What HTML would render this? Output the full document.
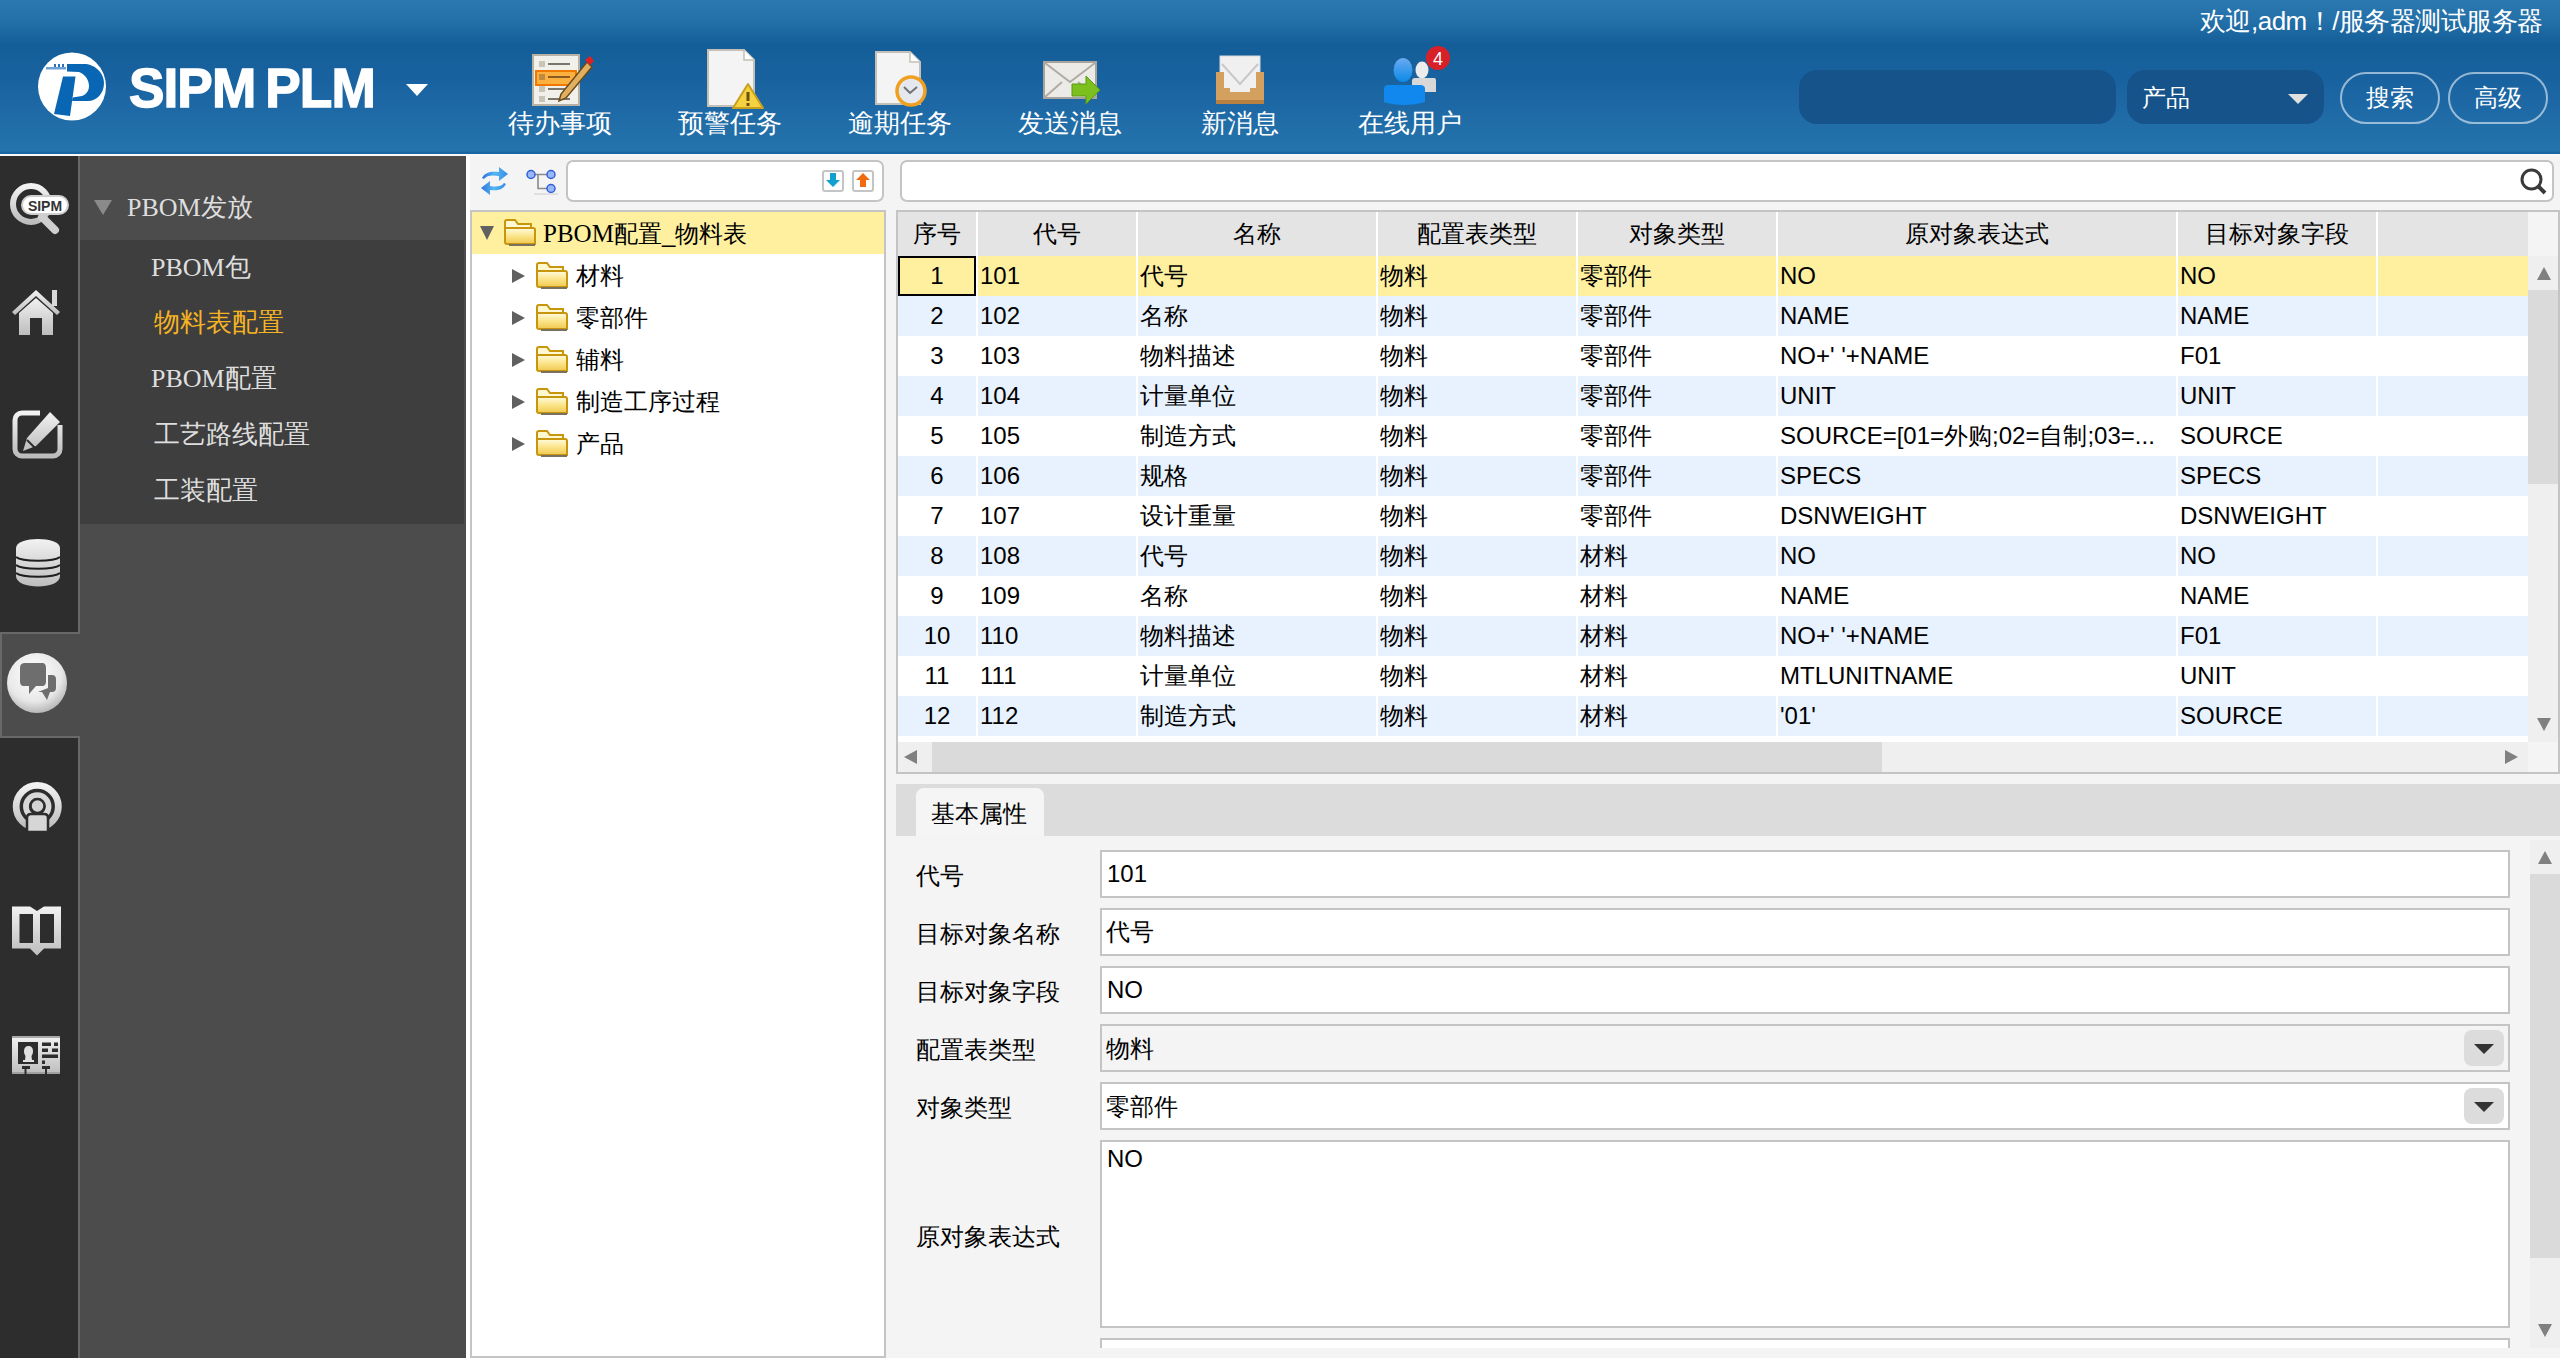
<!DOCTYPE html>
<html><head><meta charset="utf-8">
<style>
*{box-sizing:border-box;margin:0;padding:0}
html,body{width:2560px;height:1358px;overflow:hidden;background:#f4f4f4;font-family:"Liberation Sans",sans-serif;font-size:24px;color:#000;font-weight:500}
.a{position:absolute}
#hdr{left:0;top:0;width:2560px;height:154px;background:linear-gradient(#2b78b0 0px,#2470a9 20px,#135e98 45px,#1962a0 80px,#2371ab 140px,#2674ac 151px,#1a66a2 152px,#1a66a2 154px)}
#hline{left:0;top:154px;width:2560px;height:2px;background:#f8f8f8}
.tb{color:#fff;font-size:26px;line-height:26px;text-align:center;white-space:nowrap}
#iconcol{left:0;top:156px;width:78px;height:1202px;background:#2d2d2d}
#iconline{left:78px;top:156px;width:2px;height:1202px;background:#686868}
#panel{left:80px;top:156px;width:386px;height:1202px;background:#4c4c4c}
#submenu{left:80px;top:240px;width:384px;height:284px;background:#3e3e3e}
.mi{color:#dedede;font-size:26px;line-height:26px;white-space:nowrap;font-family:"Liberation Serif",serif;font-weight:400}
#split1{left:466px;top:156px;width:4px;height:1202px;background:#fff}
#treetool{left:470px;top:156px;width:416px;height:54px;background:#f4f4f4}
#tree{left:470px;top:210px;width:416px;height:1148px;background:#fff;border:2px solid #c4c4c4}
.sbox{background:#fff;border:2px solid #c4c4c4;border-radius:7px}
#grid{left:896px;top:210px;width:1664px;height:564px;background:#fff;border:2px solid #c4c4c4}
.hc{top:212px;height:44px;background:#e4e4e4;line-height:44px;text-align:center;white-space:nowrap}
.row{left:898px;width:1630px;height:40px}
.cell{top:0;height:40px;line-height:40px;white-space:nowrap;overflow:hidden;padding-left:2px}
#tabs{left:896px;top:784px;width:1664px;height:52px;background:#dcdcdc}
#tab1{left:916px;top:788px;width:128px;height:48px;background:#f5f5f5;border-radius:8px 8px 0 0}
.lbl{left:916px;font-size:24px;line-height:24px;white-space:nowrap}
.inp{left:1100px;width:1410px;height:48px;background:#fff;border:2px solid #c4c4c4;line-height:44px;padding-left:4px;white-space:nowrap}
.ddb{position:absolute;right:4px;top:4px;width:40px;height:36px;background:#dcdcdc;border-radius:8px}
.ddb:after{content:"";position:absolute;left:10px;top:14px;border-left:10px solid transparent;border-right:10px solid transparent;border-top:10px solid #333}
</style></head><body>
<!-- HEADER -->
<div id="hdr" class="a"></div>
<div id="hline" class="a"></div>

<!-- logo -->
<svg class="a" style="left:36px;top:50px" width="74" height="74" viewBox="36 50 74 74">
 <circle cx="72" cy="86.5" r="34" fill="#fff"/>
 <path d="M67 64 L84 64 C94 64 104 72 104 83 C104 94 96 101 88 101 L72 101 L72.6 97.5 L82 96 C87 94 89 90 89 86 C89 80 85 74 79 72 L67 71.5 Z" fill="#0866b4"/>
 <path d="M63 76.5 L75.5 76.5 L70 116 L54 114 Z" fill="#0866b4"/>
 <rect x="46" y="67" width="20" height="2.5" fill="#6fa2d4"/>
 <rect x="54" y="64" width="2" height="3" fill="#2a72b8"/><rect x="58" y="64" width="2" height="3" fill="#2a72b8"/><rect x="62" y="64" width="2" height="3" fill="#2a72b8"/>
</svg>
<div class="a" style="left:129px;top:58px;font-weight:bold;font-size:56px;line-height:60px;color:#fff;-webkit-text-stroke:1.4px #fff;transform:scaleX(0.95);transform-origin:0 0;white-space:nowrap;letter-spacing:-1px;word-spacing:-4px">SIPM PLM</div>
<div class="a" style="left:406px;top:84px;width:0;height:0;border-left:11px solid transparent;border-right:11px solid transparent;border-top:12px solid #fff"></div>

<!-- toolbar labels -->
<div class="a tb" style="left:500px;top:110px;width:120px">待办事项</div>
<div class="a tb" style="left:670px;top:110px;width:120px">预警任务</div>
<div class="a tb" style="left:840px;top:110px;width:120px">逾期任务</div>
<div class="a tb" style="left:1010px;top:110px;width:120px">发送消息</div>
<div class="a tb" style="left:1180px;top:110px;width:120px">新消息</div>
<div class="a tb" style="left:1350px;top:110px;width:120px">在线用户</div>

<!-- todo icon -->
<svg class="a" style="left:530px;top:52px" width="64" height="56" viewBox="0 0 64 56">
 <rect x="3" y="3" width="46" height="50" fill="#f2f0ea" stroke="#b8b2a4" stroke-width="2"/>
 <g fill="#c9c4b8"><rect x="9" y="9" width="6" height="6"/><rect x="9" y="34" width="6" height="6"/><rect x="9" y="44" width="6" height="6"/></g>
 <g stroke="#7a766c" stroke-width="2"><line x1="18" y1="12" x2="40" y2="12"/><line x1="18" y1="37" x2="40" y2="37"/><line x1="18" y1="47" x2="40" y2="47"/></g>
 <rect x="6" y="19" width="40" height="14" fill="#fbb040" stroke="#f07800" stroke-width="2"/>
 <rect x="9" y="22" width="6" height="6" fill="#c08a40"/><line x1="18" y1="25" x2="40" y2="25" stroke="#8a5a20" stroke-width="2"/>
 <path d="M57 10 L62 15 L36 46 L29 49 L31 42 Z" fill="#e0b060" stroke="#6a4a1a" stroke-width="1.5"/>
 <path d="M55 8 L60 4 L64 9 L60 13 Z" fill="#e02020"/>
</svg>
<!-- warning doc icon -->
<svg class="a" style="left:704px;top:48px" width="64" height="62" viewBox="0 0 64 62">
 <path d="M4 2 L40 2 L50 12 L50 58 L4 58 Z" fill="#f4f4f4" stroke="#c4c0b8" stroke-width="2"/>
 <path d="M40 2 L40 12 L50 12" fill="#fff" stroke="#c4c0b8" stroke-width="1.5"/>
 <path d="M44 36 L59 60 L29 60 Z" fill="#f6d240" stroke="#c8a020" stroke-width="2" stroke-linejoin="round"/>
 <rect x="42.5" y="44" width="3" height="9" fill="#6a5010"/><rect x="42.5" y="55" width="3" height="3" fill="#6a5010"/>
</svg>
<!-- overdue doc icon -->
<svg class="a" style="left:874px;top:50px" width="56" height="60" viewBox="0 0 56 60">
 <path d="M2 2 L36 2 L46 12 L46 54 L2 54 Z" fill="#f4f4f4" stroke="#c4c0b8" stroke-width="2"/>
 <path d="M36 2 L36 12 L46 12" fill="#fff" stroke="#c4c0b8" stroke-width="1.5"/>
 <circle cx="37" cy="41" r="14" fill="#e6e8f0" stroke="#f0a020" stroke-width="3.5"/>
 <path d="M30 37 L36 43 L43 37" fill="none" stroke="#707070" stroke-width="2"/>
</svg>
<!-- send msg icon -->
<svg class="a" style="left:1042px;top:60px" width="60" height="48" viewBox="0 0 60 48">
 <rect x="2" y="2" width="52" height="36" fill="#ecebe8" stroke="#a8a49c" stroke-width="2"/>
 <path d="M3 3 L28 22 L53 3 M3 37 L20 22 M53 37 L36 22" fill="none" stroke="#b0aca4" stroke-width="2"/>
 <path d="M30 24 L44 24 L44 16 L58 30 L44 44 L44 36 L30 36 Z" fill="#7cc020" stroke="#5a9a10" stroke-width="1"/>
</svg>
<!-- new msg icon -->
<svg class="a" style="left:1214px;top:54px" width="52" height="54" viewBox="0 0 52 54">
 <rect x="6" y="2" width="40" height="40" fill="#f0f0f0" stroke="#d8d8d8" stroke-width="1"/>
 <path d="M8 10 L26 30 L44 10" fill="none" stroke="#c8c8c8" stroke-width="2"/>
 <path d="M2 18 L10 18 L10 34 L16 34 L16 38 L36 38 L36 34 L42 34 L42 18 L50 18 L50 50 L2 50 Z" fill="#d4a060"/>
 <rect x="2" y="46" width="48" height="4" fill="#b88040"/>
</svg>
<!-- users icon -->
<svg class="a" style="left:1380px;top:44px" width="74" height="64" viewBox="0 0 74 64">
 <defs><linearGradient id="ub" x1="0" y1="0" x2="0" y2="1"><stop offset="0" stop-color="#6aaaf0"/><stop offset="1" stop-color="#0a8ae8"/></linearGradient></defs>
 <ellipse cx="42" cy="26" rx="6.5" ry="8.5" fill="#ececec"/>
 <path d="M32 37 C32 35 33 34 35 34 L54 34 C56 34 56 36 56 38 L56 48 L32 48 Z" fill="#d8d8d8"/>
 <ellipse cx="23" cy="26" rx="9.5" ry="12" fill="url(#ub)"/>
 <path d="M4 45 C4 41 7 41 10 41 L40 41 C43 41 45 42 45 45 L45 58 C32 62 16 62 4 58 Z" fill="#1088ee"/>
 <circle cx="58" cy="14" r="12" fill="#d82028"/>
 <text x="58" y="21" font-family="Liberation Sans" font-size="18" fill="#fff" text-anchor="middle">4</text>
</svg>

<!-- welcome -->
<div class="a" style="right:17px;top:8px;color:#fff;font-size:26px;line-height:26px;letter-spacing:-0.5px;white-space:nowrap">欢迎,adm！/服务器测试服务器</div>
<!-- search -->
<div class="a" style="left:1799px;top:70px;width:317px;height:54px;background:#15538a;border-radius:18px"></div>
<div class="a" style="left:2127px;top:70px;width:197px;height:54px;background:#15538a;border-radius:18px"></div>
<div class="a" style="left:2142px;top:85px;color:#fff;font-size:24px;line-height:26px">产品</div>
<div class="a" style="left:2288px;top:94px;width:0;height:0;border-left:10px solid transparent;border-right:10px solid transparent;border-top:10px solid #e0e0e0"></div>
<div class="a" style="left:2340px;top:72px;width:100px;height:52px;border:2px solid rgba(255,255,255,0.55);border-radius:26px;color:#fff;text-align:center;line-height:48px">搜索</div>
<div class="a" style="left:2448px;top:72px;width:100px;height:52px;border:2px solid rgba(255,255,255,0.55);border-radius:26px;color:#fff;text-align:center;line-height:48px">高级</div>

<!-- LEFT ICON COLUMN -->
<div id="iconcol" class="a"></div>
<div id="iconline" class="a"></div>
<div class="a" style="left:0;top:632px;width:80px;height:106px;background:#4c4c4c;border:2px solid #686868;border-right:none"></div>

<svg class="a" style="left:0;top:156px" width="78" height="940" viewBox="0 156 78 940">
 <defs>
  <linearGradient id="gg" x1="0" y1="0" x2="0" y2="1"><stop offset="0" stop-color="#f2f2f2"/><stop offset="1" stop-color="#bdbdbd"/></linearGradient>
  <radialGradient id="rg" cx="0.45" cy="0.35" r="0.65"><stop offset="0" stop-color="#ffffff"/><stop offset="0.7" stop-color="#e8e8e8"/><stop offset="1" stop-color="#b8b8b8"/></radialGradient>
 </defs>
 <!-- SIPM magnifier -->
 <circle cx="31" cy="204" r="18" fill="none" stroke="url(#gg)" stroke-width="6"/>
 <path d="M42 217 L55 230" stroke="#cfcfcf" stroke-width="8" stroke-linecap="round"/>
 <rect x="22" y="196" width="46" height="18" rx="9" fill="#fff" stroke="#cfcfcf" stroke-width="2"/>
 <text x="45" y="211" font-family="Liberation Sans" font-size="14" font-weight="bold" fill="#333" text-anchor="middle">SIPM</text>
 <!-- house -->
 <path d="M36 290 L12 312 L15 315 L36 296 L57 315 L60 312 Z" fill="url(#gg)"/>
 <rect x="52" y="290" width="5" height="16" fill="#d8d8d8"/>
 <path d="M19 313 L36 298 L53 313 L53 335 L42 335 L42 318 L30 318 L30 335 L19 335 Z" fill="url(#gg)"/>
 <!-- edit -->
 <rect x="15" y="413" width="45" height="43" rx="7" fill="none" stroke="url(#gg)" stroke-width="5"/>
 <rect x="40" y="405" width="24" height="20" fill="#2d2d2d"/>
 <path d="M50 412 L60 422 L36 446 L23 451 L27 438 Z" fill="url(#gg)"/>
 <path d="M27 440 L35 448" stroke="#2d2d2d" stroke-width="2"/>
 <!-- database -->
 <path d="M16 548 C16 536 60 536 60 548 L60 576 C60 590 16 590 16 576 Z" fill="url(#gg)"/>
 <g fill="none" stroke="#1e1e1e" stroke-width="2.2">
  <path d="M16 557 C22 562 54 562 60 557"/>
  <path d="M16 565 C22 570 54 570 60 565"/>
  <path d="M16 573 C22 578 54 578 60 573"/>
 </g>
 <!-- chat glossy -->
 <circle cx="37" cy="683" r="30" fill="url(#rg)"/>
 <path d="M20 668 C20 664 22 663 26 663 L42 663 C45 663 46 665 46 668 L46 681 C46 684 45 686 42 686 L36 686 L29 694 L29 686 L24 686 C21 686 20 684 20 681 Z" fill="#6e6e6e"/>
 <path d="M48 675 L52 675 C55 675 56 677 56 679 L56 688 C56 690 55 692 52 692 L50 692 L47 700 L42 692 L38 692 L48 688 Z" fill="#6e6e6e"/>
 <!-- broadcast -->
 <circle cx="37.25" cy="806.5" r="21.1" fill="none" stroke="url(#gg)" stroke-width="6.8"/>
 <circle cx="37.25" cy="806.5" r="11.3" fill="none" stroke="#d8d8d8" stroke-width="5.8"/>
 <circle cx="37.5" cy="806" r="7" fill="#d4d4d4" stroke="#2d2d2d" stroke-width="2.5"/>
 <path d="M27 832 L27 818 C27 815 29 814 31 814 L44 814 C46 814 48 815 48 818 L48 832 Z" fill="#d6d6d6" stroke="#2d2d2d" stroke-width="2.5"/>
 <rect x="24" y="833" width="27" height="4" fill="#2d2d2d"/>
 <!-- book -->
 <path d="M12 906.5 L30 906.5 L37 911 L44 906.5 L61 906.5 L61 948.5 L44 948.5 L37 955.5 L30 948.5 L12 948.5 Z" fill="url(#gg)"/>
 <rect x="19.5" y="914" width="13.5" height="29" fill="#2d2d2d"/>
 <rect x="40" y="914" width="14" height="29" fill="#2d2d2d"/>
 <!-- id card -->
 <rect x="12" y="1036" width="48" height="38" fill="url(#gg)"/>
 <rect x="12" y="1036" width="48" height="2" fill="#a8a8a8"/>
 <rect x="12" y="1072" width="48" height="2" fill="#a0a0a0"/>
 <rect x="18" y="1042" width="20" height="22" fill="#2d2d2d"/>
 <path d="M28.5 1046 C31.5 1046 33 1048 33 1051 C33 1054 32 1055 31.5 1056 L32 1060 L34 1060 L34 1062 L23 1062 L23 1060 L25 1060 L25.5 1056 C25 1055 24 1054 24 1051 C24 1048 25.5 1046 28.5 1046 Z" fill="#e0e0e0"/>
 <g fill="#2d2d2d">
  <rect x="42" y="1042.5" width="9" height="3.5"/><rect x="54" y="1042.5" width="4" height="3.5"/>
  <rect x="42" y="1048.5" width="6" height="3.5"/><rect x="52" y="1048.5" width="6" height="3.5"/>
  <rect x="42" y="1054.5" width="16" height="3.5"/><rect x="42" y="1060.5" width="3" height="3.5"/>
  <rect x="22" y="1066" width="8" height="3"/><rect x="42" y="1066" width="8" height="3"/>
  <rect x="24.5" y="1069" width="2" height="5"/><rect x="45" y="1069" width="2" height="5"/>
 </g>
</svg>

<!-- SIDEBAR PANEL -->
<div id="panel" class="a"></div>
<div id="submenu" class="a"></div>

<div class="a" style="left:94px;top:200px;width:0;height:0;border-left:9px solid transparent;border-right:9px solid transparent;border-top:15px solid #8a8a8a"></div>
<div class="a mi" style="left:127px;top:195px">PBOM发放</div>
<div class="a mi" style="left:151px;top:255px">PBOM包</div>
<div class="a mi" style="left:154px;top:310px;color:#f5b324">物料表配置</div>
<div class="a mi" style="left:151px;top:366px">PBOM配置</div>
<div class="a mi" style="left:154px;top:422px">工艺路线配置</div>
<div class="a mi" style="left:154px;top:478px">工装配置</div>

<div id="split1" class="a"></div>

<!-- TREE -->
<div id="treetool" class="a"></div>
<div id="tree" class="a"></div>

<svg width="0" height="0" style="position:absolute"><defs><linearGradient id="fg" x1="0" y1="0" x2="0" y2="1"><stop offset="0" stop-color="#fffbe0"/><stop offset="0.5" stop-color="#fbe58a"/><stop offset="1" stop-color="#f0c850"/></linearGradient></defs></svg>
<!-- tree toolbar -->
<svg class="a" style="left:478px;top:164px" width="34" height="34" viewBox="0 0 34 34">
 <defs><linearGradient id="ra" x1="0" y1="0" x2="1" y2="0"><stop offset="0" stop-color="#3070e0"/><stop offset="0.5" stop-color="#50b8f0"/><stop offset="1" stop-color="#3a8ae8"/></linearGradient></defs>
 <path d="M4 14 C7 8 13 7 21 8 L21 3 L30 10 L21 17 L21 12 C14 11 9 11 6 15 Z" fill="url(#ra)"/>
 <path d="M28 20 C25 26 19 27 12 26 L12 31 L3 24 L12 17 L12 22 C18 23 23 23 26 19 Z" fill="url(#ra)"/>
</svg>
<svg class="a" style="left:522px;top:166px" width="40" height="32" viewBox="0 0 40 32">
 <path d="M9 8.5 L25 8.5 M16 8.5 L16 22.5 L25 22.5" stroke="#8a8a8a" stroke-width="1.6" fill="none"/>
 <circle cx="9" cy="8.5" r="4" fill="#9ab8f8" stroke="#3060d8" stroke-width="1.5"/>
 <circle cx="29" cy="8.5" r="4" fill="#9ab8f8" stroke="#3060d8" stroke-width="1.5"/>
 <circle cx="29" cy="22.5" r="4" fill="#9ab8f8" stroke="#3060d8" stroke-width="1.5"/>
 <rect x="12" y="27" width="24" height="2" fill="#e0e0e0"/>
</svg>
<div class="a sbox" style="left:566px;top:160px;width:318px;height:42px"></div>
<div class="a" style="left:822px;top:170px;width:22px;height:22px;border:2px solid #c4c4c4;border-radius:3px;background:#fff"></div>
<svg class="a" style="left:826px;top:173px" width="14" height="16" viewBox="0 0 14 16"><path d="M4 0 L10 0 L10 7 L14 7 L7 14 L0 7 L4 7 Z" fill="#12a0d0"/></svg>
<div class="a" style="left:852px;top:170px;width:22px;height:22px;border:2px solid #c4c4c4;border-radius:3px;background:#fff"></div>
<svg class="a" style="left:856px;top:173px" width="14" height="16" viewBox="0 0 14 16"><path d="M7 0 L14 7 L10 7 L10 14 L4 14 L4 7 L0 7 Z" fill="#f06a10"/></svg>
<!-- tree body -->
<div class="a" style="left:472px;top:212px;width:412px;height:42px;background:#fff0a0"></div>
<div class="a" style="left:480px;top:226px;width:0;height:0;border-left:7px solid transparent;border-right:7px solid transparent;border-top:14px solid #606060"></div>
<svg class="a" style="left:503px;top:219px" width="34" height="28" viewBox="0 0 34 28"><defs></defs><path d="M2 6 L2 3 C2 2 3 1 4 1 L12 1 L15 5 L28 5 L28 10 L2 10 Z" fill="#fff8d0" stroke="#c8960c" stroke-width="2"/><path d="M2 9 L30 9 C31 9 32 10 32 11 L32 25 L4 25 C3 25 2 24 2 23 Z" fill="url(#fg)" stroke="#c8960c" stroke-width="2"/><path d="M6 26 L32 26" stroke="#7a7060" stroke-width="2"/></svg>
<div class="a" style="left:543px;top:222px;line-height:24px;white-space:nowrap"><span style="font-family:'Liberation Serif',serif;font-size:25px">PBOM</span>配置_物料表</div>
<div class="a" style="left:512px;top:269px;width:0;height:0;border-top:7px solid transparent;border-bottom:7px solid transparent;border-left:13px solid #606060"></div>
<svg class="a" style="left:535px;top:262px" width="34" height="28" viewBox="0 0 34 28"><defs></defs><path d="M2 6 L2 3 C2 2 3 1 4 1 L12 1 L15 5 L28 5 L28 10 L2 10 Z" fill="#fff8d0" stroke="#c8960c" stroke-width="2"/><path d="M2 9 L30 9 C31 9 32 10 32 11 L32 25 L4 25 C3 25 2 24 2 23 Z" fill="url(#fg)" stroke="#c8960c" stroke-width="2"/><path d="M6 26 L32 26" stroke="#7a7060" stroke-width="2"/></svg>
<div class="a" style="left:576px;top:264px;line-height:24px;white-space:nowrap">材料</div>
<div class="a" style="left:512px;top:311px;width:0;height:0;border-top:7px solid transparent;border-bottom:7px solid transparent;border-left:13px solid #606060"></div>
<svg class="a" style="left:535px;top:304px" width="34" height="28" viewBox="0 0 34 28"><defs></defs><path d="M2 6 L2 3 C2 2 3 1 4 1 L12 1 L15 5 L28 5 L28 10 L2 10 Z" fill="#fff8d0" stroke="#c8960c" stroke-width="2"/><path d="M2 9 L30 9 C31 9 32 10 32 11 L32 25 L4 25 C3 25 2 24 2 23 Z" fill="url(#fg)" stroke="#c8960c" stroke-width="2"/><path d="M6 26 L32 26" stroke="#7a7060" stroke-width="2"/></svg>
<div class="a" style="left:576px;top:306px;line-height:24px;white-space:nowrap">零部件</div>
<div class="a" style="left:512px;top:353px;width:0;height:0;border-top:7px solid transparent;border-bottom:7px solid transparent;border-left:13px solid #606060"></div>
<svg class="a" style="left:535px;top:346px" width="34" height="28" viewBox="0 0 34 28"><defs></defs><path d="M2 6 L2 3 C2 2 3 1 4 1 L12 1 L15 5 L28 5 L28 10 L2 10 Z" fill="#fff8d0" stroke="#c8960c" stroke-width="2"/><path d="M2 9 L30 9 C31 9 32 10 32 11 L32 25 L4 25 C3 25 2 24 2 23 Z" fill="url(#fg)" stroke="#c8960c" stroke-width="2"/><path d="M6 26 L32 26" stroke="#7a7060" stroke-width="2"/></svg>
<div class="a" style="left:576px;top:348px;line-height:24px;white-space:nowrap">辅料</div>
<div class="a" style="left:512px;top:395px;width:0;height:0;border-top:7px solid transparent;border-bottom:7px solid transparent;border-left:13px solid #606060"></div>
<svg class="a" style="left:535px;top:388px" width="34" height="28" viewBox="0 0 34 28"><defs></defs><path d="M2 6 L2 3 C2 2 3 1 4 1 L12 1 L15 5 L28 5 L28 10 L2 10 Z" fill="#fff8d0" stroke="#c8960c" stroke-width="2"/><path d="M2 9 L30 9 C31 9 32 10 32 11 L32 25 L4 25 C3 25 2 24 2 23 Z" fill="url(#fg)" stroke="#c8960c" stroke-width="2"/><path d="M6 26 L32 26" stroke="#7a7060" stroke-width="2"/></svg>
<div class="a" style="left:576px;top:390px;line-height:24px;white-space:nowrap">制造工序过程</div>
<div class="a" style="left:512px;top:437px;width:0;height:0;border-top:7px solid transparent;border-bottom:7px solid transparent;border-left:13px solid #606060"></div>
<svg class="a" style="left:535px;top:430px" width="34" height="28" viewBox="0 0 34 28"><defs></defs><path d="M2 6 L2 3 C2 2 3 1 4 1 L12 1 L15 5 L28 5 L28 10 L2 10 Z" fill="#fff8d0" stroke="#c8960c" stroke-width="2"/><path d="M2 9 L30 9 C31 9 32 10 32 11 L32 25 L4 25 C3 25 2 24 2 23 Z" fill="url(#fg)" stroke="#c8960c" stroke-width="2"/><path d="M6 26 L32 26" stroke="#7a7060" stroke-width="2"/></svg>
<div class="a" style="left:576px;top:432px;line-height:24px;white-space:nowrap">产品</div>

<!-- GRID -->
<div class="a sbox" style="left:900px;top:160px;width:1654px;height:42px"></div>
<div id="grid" class="a"></div>

<!-- grid header -->
<div class="a" style="left:898px;top:212px;width:1630px;height:44px;background:#fff"></div>
<div class="a" style="left:898px;top:212px;width:78px;height:44px;background:#e4e4e4"></div>
<div class="a" style="left:898px;top:222px;width:78px;line-height:24px;text-align:center;white-space:nowrap">序号</div>
<div class="a" style="left:978px;top:212px;width:158px;height:44px;background:#e4e4e4"></div>
<div class="a" style="left:978px;top:222px;width:158px;line-height:24px;text-align:center;white-space:nowrap">代号</div>
<div class="a" style="left:1138px;top:212px;width:238px;height:44px;background:#e4e4e4"></div>
<div class="a" style="left:1138px;top:222px;width:238px;line-height:24px;text-align:center;white-space:nowrap">名称</div>
<div class="a" style="left:1378px;top:212px;width:198px;height:44px;background:#e4e4e4"></div>
<div class="a" style="left:1378px;top:222px;width:198px;line-height:24px;text-align:center;white-space:nowrap">配置表类型</div>
<div class="a" style="left:1578px;top:212px;width:198px;height:44px;background:#e4e4e4"></div>
<div class="a" style="left:1578px;top:222px;width:198px;line-height:24px;text-align:center;white-space:nowrap">对象类型</div>
<div class="a" style="left:1778px;top:212px;width:398px;height:44px;background:#e4e4e4"></div>
<div class="a" style="left:1778px;top:222px;width:398px;line-height:24px;text-align:center;white-space:nowrap">原对象表达式</div>
<div class="a" style="left:2178px;top:212px;width:198px;height:44px;background:#e4e4e4"></div>
<div class="a" style="left:2178px;top:222px;width:198px;line-height:24px;text-align:center;white-space:nowrap">目标对象字段</div>
<div class="a" style="left:2378px;top:212px;width:150px;height:44px;background:#e4e4e4"></div>
<div class="a" style="left:898px;top:256px;width:1630px;height:40px;background:#fff"></div>
<div class="a" style="left:898px;top:256px;width:78px;height:40px;background:#fff0a0"></div>
<div class="a" style="left:978px;top:256px;width:158px;height:40px;background:#fff0a0"></div>
<div class="a" style="left:1138px;top:256px;width:238px;height:40px;background:#fff0a0"></div>
<div class="a" style="left:1378px;top:256px;width:198px;height:40px;background:#fff0a0"></div>
<div class="a" style="left:1578px;top:256px;width:198px;height:40px;background:#fff0a0"></div>
<div class="a" style="left:1778px;top:256px;width:398px;height:40px;background:#fff0a0"></div>
<div class="a" style="left:2178px;top:256px;width:198px;height:40px;background:#fff0a0"></div>
<div class="a" style="left:2378px;top:256px;width:150px;height:40px;background:#fff0a0"></div>
<div class="a" style="left:898px;top:264px;width:78px;line-height:24px;text-align:center">1</div>
<div class="a" style="left:980px;top:264px;line-height:24px;white-space:nowrap">101</div>
<div class="a" style="left:1140px;top:264px;line-height:24px;white-space:nowrap">代号</div>
<div class="a" style="left:1380px;top:264px;line-height:24px;white-space:nowrap">物料</div>
<div class="a" style="left:1580px;top:264px;line-height:24px;white-space:nowrap">零部件</div>
<div class="a" style="left:1780px;top:264px;line-height:24px;white-space:nowrap">NO</div>
<div class="a" style="left:2180px;top:264px;line-height:24px;white-space:nowrap">NO</div>
<div class="a" style="left:898px;top:296px;width:1630px;height:40px;background:#fff"></div>
<div class="a" style="left:898px;top:296px;width:78px;height:40px;background:#e8f2fe"></div>
<div class="a" style="left:978px;top:296px;width:158px;height:40px;background:#e8f2fe"></div>
<div class="a" style="left:1138px;top:296px;width:238px;height:40px;background:#e8f2fe"></div>
<div class="a" style="left:1378px;top:296px;width:198px;height:40px;background:#e8f2fe"></div>
<div class="a" style="left:1578px;top:296px;width:198px;height:40px;background:#e8f2fe"></div>
<div class="a" style="left:1778px;top:296px;width:398px;height:40px;background:#e8f2fe"></div>
<div class="a" style="left:2178px;top:296px;width:198px;height:40px;background:#e8f2fe"></div>
<div class="a" style="left:2378px;top:296px;width:150px;height:40px;background:#e8f2fe"></div>
<div class="a" style="left:898px;top:304px;width:78px;line-height:24px;text-align:center">2</div>
<div class="a" style="left:980px;top:304px;line-height:24px;white-space:nowrap">102</div>
<div class="a" style="left:1140px;top:304px;line-height:24px;white-space:nowrap">名称</div>
<div class="a" style="left:1380px;top:304px;line-height:24px;white-space:nowrap">物料</div>
<div class="a" style="left:1580px;top:304px;line-height:24px;white-space:nowrap">零部件</div>
<div class="a" style="left:1780px;top:304px;line-height:24px;white-space:nowrap">NAME</div>
<div class="a" style="left:2180px;top:304px;line-height:24px;white-space:nowrap">NAME</div>
<div class="a" style="left:898px;top:336px;width:1630px;height:40px;background:#fff"></div>
<div class="a" style="left:898px;top:336px;width:78px;height:40px;background:#fff"></div>
<div class="a" style="left:978px;top:336px;width:158px;height:40px;background:#fff"></div>
<div class="a" style="left:1138px;top:336px;width:238px;height:40px;background:#fff"></div>
<div class="a" style="left:1378px;top:336px;width:198px;height:40px;background:#fff"></div>
<div class="a" style="left:1578px;top:336px;width:198px;height:40px;background:#fff"></div>
<div class="a" style="left:1778px;top:336px;width:398px;height:40px;background:#fff"></div>
<div class="a" style="left:2178px;top:336px;width:198px;height:40px;background:#fff"></div>
<div class="a" style="left:2378px;top:336px;width:150px;height:40px;background:#fff"></div>
<div class="a" style="left:898px;top:344px;width:78px;line-height:24px;text-align:center">3</div>
<div class="a" style="left:980px;top:344px;line-height:24px;white-space:nowrap">103</div>
<div class="a" style="left:1140px;top:344px;line-height:24px;white-space:nowrap">物料描述</div>
<div class="a" style="left:1380px;top:344px;line-height:24px;white-space:nowrap">物料</div>
<div class="a" style="left:1580px;top:344px;line-height:24px;white-space:nowrap">零部件</div>
<div class="a" style="left:1780px;top:344px;line-height:24px;white-space:nowrap">NO+' '+NAME</div>
<div class="a" style="left:2180px;top:344px;line-height:24px;white-space:nowrap">F01</div>
<div class="a" style="left:898px;top:376px;width:1630px;height:40px;background:#fff"></div>
<div class="a" style="left:898px;top:376px;width:78px;height:40px;background:#e8f2fe"></div>
<div class="a" style="left:978px;top:376px;width:158px;height:40px;background:#e8f2fe"></div>
<div class="a" style="left:1138px;top:376px;width:238px;height:40px;background:#e8f2fe"></div>
<div class="a" style="left:1378px;top:376px;width:198px;height:40px;background:#e8f2fe"></div>
<div class="a" style="left:1578px;top:376px;width:198px;height:40px;background:#e8f2fe"></div>
<div class="a" style="left:1778px;top:376px;width:398px;height:40px;background:#e8f2fe"></div>
<div class="a" style="left:2178px;top:376px;width:198px;height:40px;background:#e8f2fe"></div>
<div class="a" style="left:2378px;top:376px;width:150px;height:40px;background:#e8f2fe"></div>
<div class="a" style="left:898px;top:384px;width:78px;line-height:24px;text-align:center">4</div>
<div class="a" style="left:980px;top:384px;line-height:24px;white-space:nowrap">104</div>
<div class="a" style="left:1140px;top:384px;line-height:24px;white-space:nowrap">计量单位</div>
<div class="a" style="left:1380px;top:384px;line-height:24px;white-space:nowrap">物料</div>
<div class="a" style="left:1580px;top:384px;line-height:24px;white-space:nowrap">零部件</div>
<div class="a" style="left:1780px;top:384px;line-height:24px;white-space:nowrap">UNIT</div>
<div class="a" style="left:2180px;top:384px;line-height:24px;white-space:nowrap">UNIT</div>
<div class="a" style="left:898px;top:416px;width:1630px;height:40px;background:#fff"></div>
<div class="a" style="left:898px;top:416px;width:78px;height:40px;background:#fff"></div>
<div class="a" style="left:978px;top:416px;width:158px;height:40px;background:#fff"></div>
<div class="a" style="left:1138px;top:416px;width:238px;height:40px;background:#fff"></div>
<div class="a" style="left:1378px;top:416px;width:198px;height:40px;background:#fff"></div>
<div class="a" style="left:1578px;top:416px;width:198px;height:40px;background:#fff"></div>
<div class="a" style="left:1778px;top:416px;width:398px;height:40px;background:#fff"></div>
<div class="a" style="left:2178px;top:416px;width:198px;height:40px;background:#fff"></div>
<div class="a" style="left:2378px;top:416px;width:150px;height:40px;background:#fff"></div>
<div class="a" style="left:898px;top:424px;width:78px;line-height:24px;text-align:center">5</div>
<div class="a" style="left:980px;top:424px;line-height:24px;white-space:nowrap">105</div>
<div class="a" style="left:1140px;top:424px;line-height:24px;white-space:nowrap">制造方式</div>
<div class="a" style="left:1380px;top:424px;line-height:24px;white-space:nowrap">物料</div>
<div class="a" style="left:1580px;top:424px;line-height:24px;white-space:nowrap">零部件</div>
<div class="a" style="left:1780px;top:424px;line-height:24px;white-space:nowrap">SOURCE=[01=外购;02=自制;03=...</div>
<div class="a" style="left:2180px;top:424px;line-height:24px;white-space:nowrap">SOURCE</div>
<div class="a" style="left:898px;top:456px;width:1630px;height:40px;background:#fff"></div>
<div class="a" style="left:898px;top:456px;width:78px;height:40px;background:#e8f2fe"></div>
<div class="a" style="left:978px;top:456px;width:158px;height:40px;background:#e8f2fe"></div>
<div class="a" style="left:1138px;top:456px;width:238px;height:40px;background:#e8f2fe"></div>
<div class="a" style="left:1378px;top:456px;width:198px;height:40px;background:#e8f2fe"></div>
<div class="a" style="left:1578px;top:456px;width:198px;height:40px;background:#e8f2fe"></div>
<div class="a" style="left:1778px;top:456px;width:398px;height:40px;background:#e8f2fe"></div>
<div class="a" style="left:2178px;top:456px;width:198px;height:40px;background:#e8f2fe"></div>
<div class="a" style="left:2378px;top:456px;width:150px;height:40px;background:#e8f2fe"></div>
<div class="a" style="left:898px;top:464px;width:78px;line-height:24px;text-align:center">6</div>
<div class="a" style="left:980px;top:464px;line-height:24px;white-space:nowrap">106</div>
<div class="a" style="left:1140px;top:464px;line-height:24px;white-space:nowrap">规格</div>
<div class="a" style="left:1380px;top:464px;line-height:24px;white-space:nowrap">物料</div>
<div class="a" style="left:1580px;top:464px;line-height:24px;white-space:nowrap">零部件</div>
<div class="a" style="left:1780px;top:464px;line-height:24px;white-space:nowrap">SPECS</div>
<div class="a" style="left:2180px;top:464px;line-height:24px;white-space:nowrap">SPECS</div>
<div class="a" style="left:898px;top:496px;width:1630px;height:40px;background:#fff"></div>
<div class="a" style="left:898px;top:496px;width:78px;height:40px;background:#fff"></div>
<div class="a" style="left:978px;top:496px;width:158px;height:40px;background:#fff"></div>
<div class="a" style="left:1138px;top:496px;width:238px;height:40px;background:#fff"></div>
<div class="a" style="left:1378px;top:496px;width:198px;height:40px;background:#fff"></div>
<div class="a" style="left:1578px;top:496px;width:198px;height:40px;background:#fff"></div>
<div class="a" style="left:1778px;top:496px;width:398px;height:40px;background:#fff"></div>
<div class="a" style="left:2178px;top:496px;width:198px;height:40px;background:#fff"></div>
<div class="a" style="left:2378px;top:496px;width:150px;height:40px;background:#fff"></div>
<div class="a" style="left:898px;top:504px;width:78px;line-height:24px;text-align:center">7</div>
<div class="a" style="left:980px;top:504px;line-height:24px;white-space:nowrap">107</div>
<div class="a" style="left:1140px;top:504px;line-height:24px;white-space:nowrap">设计重量</div>
<div class="a" style="left:1380px;top:504px;line-height:24px;white-space:nowrap">物料</div>
<div class="a" style="left:1580px;top:504px;line-height:24px;white-space:nowrap">零部件</div>
<div class="a" style="left:1780px;top:504px;line-height:24px;white-space:nowrap">DSNWEIGHT</div>
<div class="a" style="left:2180px;top:504px;line-height:24px;white-space:nowrap">DSNWEIGHT</div>
<div class="a" style="left:898px;top:536px;width:1630px;height:40px;background:#fff"></div>
<div class="a" style="left:898px;top:536px;width:78px;height:40px;background:#e8f2fe"></div>
<div class="a" style="left:978px;top:536px;width:158px;height:40px;background:#e8f2fe"></div>
<div class="a" style="left:1138px;top:536px;width:238px;height:40px;background:#e8f2fe"></div>
<div class="a" style="left:1378px;top:536px;width:198px;height:40px;background:#e8f2fe"></div>
<div class="a" style="left:1578px;top:536px;width:198px;height:40px;background:#e8f2fe"></div>
<div class="a" style="left:1778px;top:536px;width:398px;height:40px;background:#e8f2fe"></div>
<div class="a" style="left:2178px;top:536px;width:198px;height:40px;background:#e8f2fe"></div>
<div class="a" style="left:2378px;top:536px;width:150px;height:40px;background:#e8f2fe"></div>
<div class="a" style="left:898px;top:544px;width:78px;line-height:24px;text-align:center">8</div>
<div class="a" style="left:980px;top:544px;line-height:24px;white-space:nowrap">108</div>
<div class="a" style="left:1140px;top:544px;line-height:24px;white-space:nowrap">代号</div>
<div class="a" style="left:1380px;top:544px;line-height:24px;white-space:nowrap">物料</div>
<div class="a" style="left:1580px;top:544px;line-height:24px;white-space:nowrap">材料</div>
<div class="a" style="left:1780px;top:544px;line-height:24px;white-space:nowrap">NO</div>
<div class="a" style="left:2180px;top:544px;line-height:24px;white-space:nowrap">NO</div>
<div class="a" style="left:898px;top:576px;width:1630px;height:40px;background:#fff"></div>
<div class="a" style="left:898px;top:576px;width:78px;height:40px;background:#fff"></div>
<div class="a" style="left:978px;top:576px;width:158px;height:40px;background:#fff"></div>
<div class="a" style="left:1138px;top:576px;width:238px;height:40px;background:#fff"></div>
<div class="a" style="left:1378px;top:576px;width:198px;height:40px;background:#fff"></div>
<div class="a" style="left:1578px;top:576px;width:198px;height:40px;background:#fff"></div>
<div class="a" style="left:1778px;top:576px;width:398px;height:40px;background:#fff"></div>
<div class="a" style="left:2178px;top:576px;width:198px;height:40px;background:#fff"></div>
<div class="a" style="left:2378px;top:576px;width:150px;height:40px;background:#fff"></div>
<div class="a" style="left:898px;top:584px;width:78px;line-height:24px;text-align:center">9</div>
<div class="a" style="left:980px;top:584px;line-height:24px;white-space:nowrap">109</div>
<div class="a" style="left:1140px;top:584px;line-height:24px;white-space:nowrap">名称</div>
<div class="a" style="left:1380px;top:584px;line-height:24px;white-space:nowrap">物料</div>
<div class="a" style="left:1580px;top:584px;line-height:24px;white-space:nowrap">材料</div>
<div class="a" style="left:1780px;top:584px;line-height:24px;white-space:nowrap">NAME</div>
<div class="a" style="left:2180px;top:584px;line-height:24px;white-space:nowrap">NAME</div>
<div class="a" style="left:898px;top:616px;width:1630px;height:40px;background:#fff"></div>
<div class="a" style="left:898px;top:616px;width:78px;height:40px;background:#e8f2fe"></div>
<div class="a" style="left:978px;top:616px;width:158px;height:40px;background:#e8f2fe"></div>
<div class="a" style="left:1138px;top:616px;width:238px;height:40px;background:#e8f2fe"></div>
<div class="a" style="left:1378px;top:616px;width:198px;height:40px;background:#e8f2fe"></div>
<div class="a" style="left:1578px;top:616px;width:198px;height:40px;background:#e8f2fe"></div>
<div class="a" style="left:1778px;top:616px;width:398px;height:40px;background:#e8f2fe"></div>
<div class="a" style="left:2178px;top:616px;width:198px;height:40px;background:#e8f2fe"></div>
<div class="a" style="left:2378px;top:616px;width:150px;height:40px;background:#e8f2fe"></div>
<div class="a" style="left:898px;top:624px;width:78px;line-height:24px;text-align:center">10</div>
<div class="a" style="left:980px;top:624px;line-height:24px;white-space:nowrap">110</div>
<div class="a" style="left:1140px;top:624px;line-height:24px;white-space:nowrap">物料描述</div>
<div class="a" style="left:1380px;top:624px;line-height:24px;white-space:nowrap">物料</div>
<div class="a" style="left:1580px;top:624px;line-height:24px;white-space:nowrap">材料</div>
<div class="a" style="left:1780px;top:624px;line-height:24px;white-space:nowrap">NO+' '+NAME</div>
<div class="a" style="left:2180px;top:624px;line-height:24px;white-space:nowrap">F01</div>
<div class="a" style="left:898px;top:656px;width:1630px;height:40px;background:#fff"></div>
<div class="a" style="left:898px;top:656px;width:78px;height:40px;background:#fff"></div>
<div class="a" style="left:978px;top:656px;width:158px;height:40px;background:#fff"></div>
<div class="a" style="left:1138px;top:656px;width:238px;height:40px;background:#fff"></div>
<div class="a" style="left:1378px;top:656px;width:198px;height:40px;background:#fff"></div>
<div class="a" style="left:1578px;top:656px;width:198px;height:40px;background:#fff"></div>
<div class="a" style="left:1778px;top:656px;width:398px;height:40px;background:#fff"></div>
<div class="a" style="left:2178px;top:656px;width:198px;height:40px;background:#fff"></div>
<div class="a" style="left:2378px;top:656px;width:150px;height:40px;background:#fff"></div>
<div class="a" style="left:898px;top:664px;width:78px;line-height:24px;text-align:center">11</div>
<div class="a" style="left:980px;top:664px;line-height:24px;white-space:nowrap">111</div>
<div class="a" style="left:1140px;top:664px;line-height:24px;white-space:nowrap">计量单位</div>
<div class="a" style="left:1380px;top:664px;line-height:24px;white-space:nowrap">物料</div>
<div class="a" style="left:1580px;top:664px;line-height:24px;white-space:nowrap">材料</div>
<div class="a" style="left:1780px;top:664px;line-height:24px;white-space:nowrap">MTLUNITNAME</div>
<div class="a" style="left:2180px;top:664px;line-height:24px;white-space:nowrap">UNIT</div>
<div class="a" style="left:898px;top:696px;width:1630px;height:40px;background:#fff"></div>
<div class="a" style="left:898px;top:696px;width:78px;height:40px;background:#e8f2fe"></div>
<div class="a" style="left:978px;top:696px;width:158px;height:40px;background:#e8f2fe"></div>
<div class="a" style="left:1138px;top:696px;width:238px;height:40px;background:#e8f2fe"></div>
<div class="a" style="left:1378px;top:696px;width:198px;height:40px;background:#e8f2fe"></div>
<div class="a" style="left:1578px;top:696px;width:198px;height:40px;background:#e8f2fe"></div>
<div class="a" style="left:1778px;top:696px;width:398px;height:40px;background:#e8f2fe"></div>
<div class="a" style="left:2178px;top:696px;width:198px;height:40px;background:#e8f2fe"></div>
<div class="a" style="left:2378px;top:696px;width:150px;height:40px;background:#e8f2fe"></div>
<div class="a" style="left:898px;top:704px;width:78px;line-height:24px;text-align:center">12</div>
<div class="a" style="left:980px;top:704px;line-height:24px;white-space:nowrap">112</div>
<div class="a" style="left:1140px;top:704px;line-height:24px;white-space:nowrap">制造方式</div>
<div class="a" style="left:1380px;top:704px;line-height:24px;white-space:nowrap">物料</div>
<div class="a" style="left:1580px;top:704px;line-height:24px;white-space:nowrap">材料</div>
<div class="a" style="left:1780px;top:704px;line-height:24px;white-space:nowrap">'01'</div>
<div class="a" style="left:2180px;top:704px;line-height:24px;white-space:nowrap">SOURCE</div>
<div class="a" style="left:898px;top:256px;width:78px;height:40px;border:2px solid #000"></div>
<div class="a" style="left:2528px;top:212px;width:30px;height:44px;background:#f4f4f4"></div>
<div class="a" style="left:2528px;top:256px;width:30px;height:486px;background:#efefef"></div>
<div class="a" style="left:2528px;top:290px;width:30px;height:194px;background:#dadada"></div>
<div class="a" style="left:2537px;top:267px;width:0;height:0;border-left:7px solid transparent;border-right:7px solid transparent;border-bottom:13px solid #808080"></div>
<div class="a" style="left:2537px;top:718px;width:0;height:0;border-left:7px solid transparent;border-right:7px solid transparent;border-top:13px solid #808080"></div>
<div class="a" style="left:898px;top:742px;width:1630px;height:30px;background:#efefef"></div>
<div class="a" style="left:932px;top:742px;width:950px;height:30px;background:#dadada"></div>
<div class="a" style="left:2528px;top:742px;width:30px;height:30px;background:#f4f4f4"></div>
<div class="a" style="left:904px;top:750px;width:0;height:0;border-top:7px solid transparent;border-bottom:7px solid transparent;border-right:13px solid #808080"></div>
<div class="a" style="left:2505px;top:750px;width:0;height:0;border-top:7px solid transparent;border-bottom:7px solid transparent;border-left:13px solid #808080"></div>
<!-- grid search icon -->
<svg class="a" style="left:2516px;top:166px" width="34" height="30" viewBox="0 0 34 30"><circle cx="15.5" cy="13.5" r="9.5" fill="none" stroke="#3a3a3a" stroke-width="3"/><path d="M22 20 L29 27" stroke="#3a3a3a" stroke-width="4"/></svg>

<!-- FORM -->
<div id="tabs" class="a"></div>
<div id="tab1" class="a"></div>

<div class="a" style="left:931px;top:802px;line-height:24px;white-space:nowrap">基本属性</div>
<div class="a lbl" style="top:864px">代号</div>
<div class="a lbl" style="top:922px">目标对象名称</div>
<div class="a lbl" style="top:980px">目标对象字段</div>
<div class="a lbl" style="top:1038px">配置表类型</div>
<div class="a lbl" style="top:1096px">对象类型</div>
<div class="a lbl" style="top:1225px">原对象表达式</div>
<div class="a inp" style="top:850px"></div>
<div class="a inp" style="top:908px"></div>
<div class="a inp" style="top:966px"></div>
<div class="a inp" style="top:1024px;background:#f4f4f4"></div>
<div class="a inp" style="top:1082px"></div>
<div class="a inp" style="top:1140px;height:188px"></div>
<div class="a" style="left:1100px;top:1338px;width:1410px;height:10px;background:#fff;border:2px solid #c4c4c4;border-bottom:none"></div>
<div class="a" style="left:1107px;top:862px;line-height:24px">101</div>
<div class="a" style="left:1106px;top:920px;line-height:24px">代号</div>
<div class="a" style="left:1107px;top:978px;line-height:24px">NO</div>
<div class="a" style="left:1106px;top:1037px;line-height:24px">物料</div>
<div class="a" style="left:1106px;top:1095px;line-height:24px">零部件</div>
<div class="a" style="left:1107px;top:1147px;line-height:24px">NO</div>
<div class="a" style="left:2464px;top:1030px;width:40px;height:36px;background:#dcdcdc;border-radius:8px"></div>
<div class="a" style="left:2474px;top:1044px;width:0;height:0;border-left:10px solid transparent;border-right:10px solid transparent;border-top:10px solid #333"></div>
<div class="a" style="left:2464px;top:1088px;width:40px;height:36px;background:#dcdcdc;border-radius:8px"></div>
<div class="a" style="left:2474px;top:1102px;width:0;height:0;border-left:10px solid transparent;border-right:10px solid transparent;border-top:10px solid #333"></div>
<div class="a" style="left:2530px;top:840px;width:30px;height:508px;background:#efefef"></div>
<div class="a" style="left:2530px;top:874px;width:30px;height:384px;background:#dadada"></div>
<div class="a" style="left:2538px;top:851px;width:0;height:0;border-left:7px solid transparent;border-right:7px solid transparent;border-bottom:13px solid #808080"></div>
<div class="a" style="left:2538px;top:1324px;width:0;height:0;border-left:7px solid transparent;border-right:7px solid transparent;border-top:13px solid #808080"></div>
</body></html>
